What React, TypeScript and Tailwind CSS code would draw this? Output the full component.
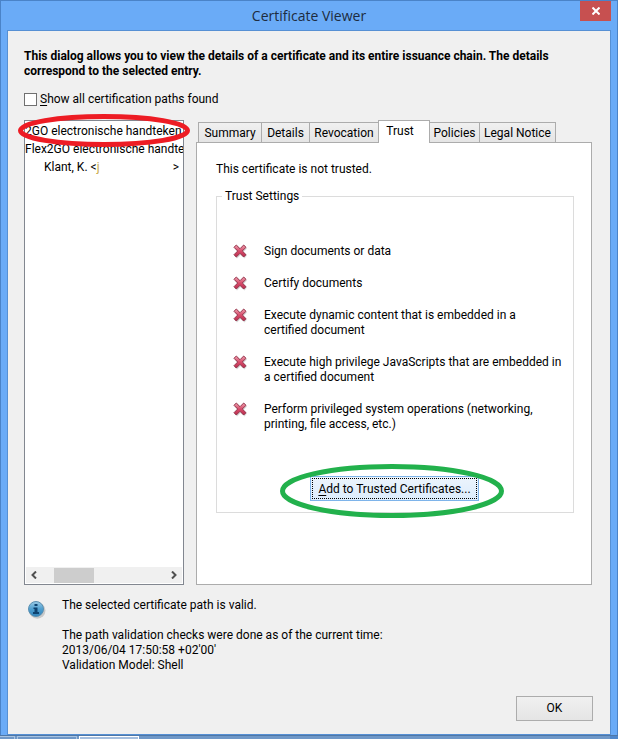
import type { ReactNode } from "react";

const TABS = [
  { label: "Summary", width: "w-[64px]" },
  { label: "Details", width: "w-[49px]" },
  { label: "Revocation", width: "w-[70px]" },
  { label: "Trust", width: "w-[52px]" },
  { label: "Policies", width: "w-[51px]" },
  { label: "Legal Notice", width: "w-[77px]" },
];

const PERMISSIONS = [
  ["Sign documents or data"],
  ["Certify documents"],
  ["Execute dynamic content that is embedded in a", "certified document"],
  ["Execute high privilege JavaScripts that are embedded in", "a certified document"],
  ["Perform privileged system operations (networking,", "printing, file access, etc.)"],
];

function Lines({ lines }: { lines: string[] }) {
  return (
    <>
      {lines.map((line) => (
        <span key={line} className="block whitespace-nowrap">
          {line}
        </span>
      ))}
    </>
  );
}

function DeniedIcon() {
  return (
    <svg viewBox="0 0 15 15" className="size-[15px] shrink-0" aria-hidden="true">
      <defs>
        <linearGradient id="denied" x1="0" y1="0" x2="0" y2="1">
          <stop offset="0" stopColor="#ee9fae" />
          <stop offset="0.5" stopColor="#d84d6c" />
          <stop offset="1" stopColor="#b92c4c" />
        </linearGradient>
      </defs>
      <path d="M4 1.5 7.5 5 11 1.5 14 4.5 10.5 8 14 11.5 11.5 14.5 7.5 11 4 14.5 1.5 12 5 8 1.5 4.5Z" fill="#000" opacity="0.16" />
      <path
        d="M3.3 1 7 4.7 10.7 1 13 3.3 9.3 7 13 10.7 10.7 13 7 9.3 3.3 13 1 10.7 4.7 7 1 3.3Z"
        fill="url(#denied)"
        stroke="#94324a"
        strokeWidth="1"
      />
    </svg>
  );
}

function InfoIcon() {
  return (
    <svg viewBox="0 0 18 18" className="size-[18px] shrink-0" aria-hidden="true">
      <defs>
        <linearGradient id="info" x1="0" y1="0" x2="0" y2="1">
          <stop offset="0" stopColor="#9bcbe6" />
          <stop offset="0.5" stopColor="#4f9fd0" />
          <stop offset="1" stopColor="#2f82ba" />
        </linearGradient>
      </defs>
      <circle cx="9.3" cy="9.5" r="8.2" fill="#000" opacity="0.16" />
      <circle cx="8" cy="8" r="7.5" fill="url(#info)" stroke="#5b8fb0" />
      <path d="M6.500 3h3v2h-3zM5.500 6.500h4V11H11v2H5v-2h1.500V8h-1z" fill="#0e4370" />
    </svg>
  );
}

function Chevron({ d }: { d: string }) {
  return (
    <svg viewBox="0 0 8 8" className="size-2" fill="none" stroke="#505050" strokeWidth="2" aria-hidden="true">
      <path d={d} />
    </svg>
  );
}

function Access({ children }: { children: ReactNode }) {
  return <span className="underline underline-offset-2">{children}</span>;
}

function CertificateList() {
  return (
    <div className="relative flex w-[160px] shrink-0 flex-col border border-[#828790] bg-white">
      <ul className="flex-1 overflow-hidden whitespace-nowrap pt-px leading-[18px]">
        <li>2GO electronische handteken</li>
        <li>Flex2GO electronische handte</li>
        <li className="flex justify-between pl-[19px] pr-1">
          <span>
            Klant, K. &lt;<span className="text-[#c9a94a]">j</span>
          </span>
          <span>&gt;</span>
        </li>
      </ul>
      <div className="m-px flex h-4 items-center bg-[#f0f0f0]">
        <button type="button" aria-label="Scroll left" className="flex w-4 justify-center">
          <Chevron d="M6 0.500 2.500 4 6 7.500" />
        </button>
        <div className="ml-3 h-[15px] w-10 bg-[#cdcdcd]" />
        <button type="button" aria-label="Scroll right" className="ml-auto flex w-4 justify-center">
          <Chevron d="M2 0.500 5.500 4 2 7.500" />
        </button>
      </div>
      <svg viewBox="0 0 172 33" className="pointer-events-none absolute -left-[7px] -top-[7px] h-[33px] w-[172px]" aria-hidden="true">
        <ellipse cx="86" cy="16.5" rx="83.500" ry="14" fill="none" stroke="#ed1c24" strokeWidth="5" />
      </svg>
    </div>
  );
}

function TrustPanel() {
  return (
    <div role="tabpanel" aria-label="Trust" className="h-[443px] border border-[#acacac] bg-white pl-[18px] pr-[17px] pt-[19px]">
      <p className="pl-px">This certificate is not trusted.</p>
      <fieldset className="mt-3 ml-px h-[324px] border border-[#dcdcdc] pl-4">
        <legend className="-ml-[11px] px-[3px]">Trust Settings</legend>
        <ul className="flex flex-col gap-[17px] pt-10">
          {PERMISSIONS.map((lines) => (
            <li key={lines[0]} className="flex items-start gap-4">
              <DeniedIcon />
              <span>
                <Lines lines={lines} />
              </span>
            </li>
          ))}
        </ul>
        <div className="relative mt-11 ml-[77px] w-[169px]">
          <button
            type="button"
            className="h-[25px] w-full border border-[#7eb4ea] bg-linear-to-b from-[#ecf4fc] to-[#dcecfc] p-px"
          >
            <span className="flex h-full items-center justify-center whitespace-nowrap border border-dotted border-black pt-px">
              <span>
                <Access>A</Access>dd to Trusted Certificates...
              </span>
            </span>
          </button>
          <svg viewBox="0 0 224 54" className="pointer-events-none absolute -left-[30px] -top-3 h-[54px] w-[224px] max-w-none" aria-hidden="true">
            <ellipse cx="112" cy="27" rx="109.500" ry="24.500" fill="none" stroke="#22b14c" strokeWidth="5" />
          </svg>
        </div>
      </fieldset>
    </div>
  );
}

export default function App() {
  return (
    <div className="flex min-h-screen flex-col bg-[#6f98c8] font-[Roboto,'Open_Sans',sans-serif] text-[12px] leading-[15px] text-black">
      <div className="flex flex-1 flex-col border border-b-0 border-[#4a83c8] bg-[#6aabf7] px-[6px]">
        <header className="relative flex h-[29px] shrink-0 items-center justify-center">
          <h1 className="font-['Open_Sans','Noto_Sans',sans-serif] text-[14px] leading-5 text-[#1d2c40]">
            Certificate Viewer
          </h1>
          <button
            type="button"
            aria-label="Close"
            className="absolute right-0 top-0 flex h-5 w-[31px] items-center justify-center bg-[#c75050]"
          >
            <svg viewBox="0 0 8 8" className="size-2" stroke="#fff" strokeWidth="2" aria-hidden="true">
              <path d="M0.500 0.500 7.500 7.500M7.500 0.500 0.500 7.500" />
            </svg>
          </button>
        </header>

        <main className="flex flex-1 flex-col border border-[#5690d4] bg-[#f0f0f0] pl-4 pr-[17px] pt-[18px] pb-[13px]">
          <p className="font-bold">
            <Lines
              lines={[
                "This dialog allows you to view the details of a certificate and its entire issuance chain. The details",
                "correspond to the selected entry.",
              ]}
            />
          </p>

          <label className="mt-[13px] flex items-center gap-[3px]">
            <input type="checkbox" className="size-[13px] appearance-none border border-[#707070] bg-white" />
            <span>
              <Access>S</Access>how all certification paths found
            </span>
          </label>

          <div className="mt-[13px] flex gap-3">
            <CertificateList />
            <div className="mr-px min-w-0 flex-1">
              <div role="tablist" className="relative -mb-px flex items-end pl-[2px]">
                {TABS.map(({ label, width }) =>
                  label === "Trust" ? (
                    <button
                      key={label}
                      type="button"
                      role="tab"
                      aria-selected="true"
                      className={`${width} -ml-px h-[23px] border border-b-0 border-[#acacac] bg-white pr-2 pb-px`}
                    >
                      {label}
                    </button>
                  ) : (
                    <button
                      key={label}
                      type="button"
                      role="tab"
                      aria-selected="false"
                      className={`${width} -ml-px h-[21px] whitespace-nowrap border border-[#acacac] bg-linear-to-b from-[#f0f0f0] to-[#e5e5e5] pt-px first:ml-0`}
                    >
                      {label}
                    </button>
                  ),
                )}
              </div>
              <TrustPanel />
            </div>
          </div>

          <div className="mt-[13px] flex gap-4 pl-1">
            <div className="pt-[3px]">
              <InfoIcon />
            </div>
            <div>
              <p>The selected certificate path is valid.</p>
              <p className="mt-[15px]">
                <Lines
                  lines={[
                    "The path validation checks were done as of the current time:",
                    "2013/06/04 17:50:58 +02'00'",
                    "Validation Model: Shell",
                  ]}
                />
              </p>
            </div>
          </div>

          <button
            type="button"
            className="mt-auto h-[25px] w-[77px] self-end border border-[#acacac] bg-linear-to-b from-[#f0f0f0] to-[#e5e5e5]"
          >
            OK
          </button>
        </main>
      </div>

      <div className="flex h-1 shrink-0 gap-[2px] border-t border-[#4f78a8]">
        <div className="w-[15px] border-t border-r border-[#a9c4e2]" />
        <div className="w-[60px] border border-b-0 border-[#a9c4e2]" />
        <div className="w-[60px] border border-b-0 border-white bg-[#a5bfdf]" />
        <div className="ml-auto w-2 bg-[#4f87cb]" />
      </div>
    </div>
  );
}
